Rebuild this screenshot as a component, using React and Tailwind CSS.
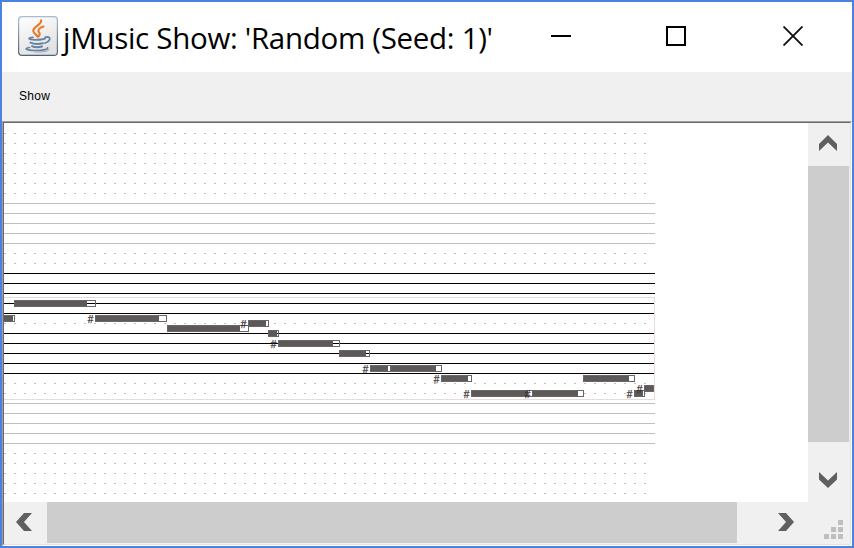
const LEFT = 4;
const TOP = 123;
const STAFF_END = 655;

const dottedRows = [133, 143, 153, 163, 173, 183, 193, 253, 263, 323, 383, 393, 453, 463, 473, 483, 493];
const ledgerRows = [203, 213, 223, 233, 243, 403, 413, 423, 433, 443];
const staffRows = [273, 283, 293, 303, 313, 333, 343, 353, 363, 373];

// x and end bound the outline; fill is where the sounding part stops
const notes = [
  { x: -6, end: 15, fill: 13, y: 315 },
  { x: 14, end: 96, fill: 87, y: 300 },
  { x: 95, end: 167, fill: 159, y: 315, sharp: true },
  { x: 167, end: 249, fill: 240, y: 325 },
  { x: 248, end: 269, fill: 266, y: 320, sharp: true },
  { x: 268, end: 279, fill: 277, y: 330 },
  { x: 278, end: 340, fill: 333, y: 340, sharp: true },
  { x: 339, end: 370, fill: 366, y: 350 },
  { x: 370, end: 391, fill: 388, y: 365, sharp: true },
  { x: 390, end: 442, fill: 436, y: 365 },
  { x: 441, end: 472, fill: 468, y: 375, sharp: true },
  { x: 471, end: 533, fill: 528, y: 390, sharp: true },
  { x: 532, end: 584, fill: 578, y: 390, sharp: true },
  { x: 583, end: 635, fill: 629, y: 375 },
  { x: 634, end: 645, fill: 643, y: 390, sharp: true },
  { x: 644, end: 654, fill: 653, y: 385, sharp: true },
];

// Notes with an empty tail hide the dotted rows beneath, but not the solid ones
const isOnSolidRow = (y) => staffRows.includes(y + 3);

function Score() {
  return (
    <svg width="804" height="379" viewBox={`${LEFT} ${TOP} 804 379`} className="block bg-white" shapeRendering="crispEdges">
      {dottedRows.map((y) => (
        <path key={y} d={`M4 ${y + 0.5}H646`} stroke="#c0c0c0" strokeDasharray="2 8" />
      ))}
      {ledgerRows.map((y) => (
        <path key={y} d={`M4 ${y + 0.5}H${STAFF_END}`} stroke="#c0c0c0" />
      ))}
      {staffRows.map((y) => (
        <path key={y} d={`M4 ${y + 0.5}H${STAFF_END}`} stroke="#000" />
      ))}
      <path d="M4 297.5H654.5V399.5H4" fill="none" stroke="#e6dcdc" />
      {notes.map((n) => (
        <g key={`${n.x}-${n.y}`}>
          {!isOnSolidRow(n.y) && <rect x={n.x} y={n.y} width={n.end - n.x} height="7" fill="#fff" />}
          <rect x={n.x} y={n.y} width={n.fill - n.x} height="7" fill="#5d5959" />
          <rect x={n.x + 0.5} y={n.y + 0.5} width={n.end - n.x - 1} height="6" fill="none" stroke="#6a6666" />
        </g>
      ))}
      {notes
        .filter((n) => n.sharp)
        .map((n) => (
          <text
            key={`${n.x}-${n.y}`}
            x={n.x - 7.2}
            y={n.y + 8}
            fontSize="10"
            fontFamily="'Liberation Sans', sans-serif"
            fill="#363232"
            stroke="#363232"
            strokeWidth="0.25"
          >
            #
          </text>
        ))}
    </svg>
  );
}

function JavaIcon() {
  return (
    <svg width="40" height="40" viewBox="0 0 40 40">
      <defs>
        <linearGradient id="plate" x1="0" y1="0" x2="0.4" y2="1">
          <stop offset="0" stopColor="#fff" />
          <stop offset="0.55" stopColor="#efefef" />
          <stop offset="1" stopColor="#e2e2e2" />
        </linearGradient>
        <linearGradient id="rim" x1="0" y1="0" x2="0" y2="1">
          <stop offset="0" stopColor="#a9bdd0" />
          <stop offset="1" stopColor="#4c6478" />
        </linearGradient>
      </defs>
      <rect x="0.6" y="0.6" width="38.8" height="38.8" rx="3.5" fill="url(#plate)" stroke="url(#rim)" strokeWidth="1.2" />
      <g fill="none" strokeLinecap="round">
        <path d="M23 4.500C24.500 8.500 14.800 10.500 15.300 15C15.600 17.500 18.500 18.500 19.500 20.500" stroke="#e8792b" strokeWidth="2.200" />
        <path d="M25.500 10.500C21 12 19.300 14 21 16.200C22.500 18 21.500 19.500 20.500 20.500" stroke="#e8792b" strokeWidth="2" />
        <path d="M15 21.300C9 22 10 23.600 17 23.800C22 23.800 25 23.400 27 22.600" stroke="#6583a0" strokeWidth="1.700" />
        <path d="M27 21.300C33 19.800 33.500 24.500 27 27" stroke="#6583a0" strokeWidth="1.800" />
        <path d="M12.500 26.600C16 28.200 21 28.100 25 27.200" stroke="#6583a0" strokeWidth="2" />
        <path d="M14 30.200C17 31.700 20.500 31.500 24 30.500" stroke="#6583a0" strokeWidth="2" />
        <path d="M11.500 31.500C5.500 32.500 8 34.300 17 34.500C26 34.600 30.500 33 29.500 31.800" stroke="#6583a0" strokeWidth="1.700" />
        <path d="M17 36C23 36.200 29.500 35.800 31.500 33.600" stroke="#8fa6bb" strokeWidth="0.900" />
      </g>
    </svg>
  );
}

function TitleBar() {
  return (
    <header className="flex h-[70px] items-center bg-white pb-0.5 pl-4">
      <JavaIcon />
      <h1 className="ml-[5px] w-[488px] whitespace-nowrap pt-1 font-['Open_Sans','Noto_Sans',sans-serif] text-[29.5px] leading-[40px] tracking-[-0.3px] text-black">
        jMusic Show: 'Random (Seed: 1)'
      </h1>
      <div className="h-0.5 w-5 bg-black" />
      <div className="ml-[95px] size-5 border-2 border-black" />
      <svg className="ml-[97px]" width="20" height="20" viewBox="0 0 20 20">
        <path d="M0.500 0.500L19.500 19.500M19.500 0.500L0.500 19.500" stroke="#111" strokeWidth="1.900" />
      </svg>
    </header>
  );
}

function Arrow({ points, width, height, className }) {
  return (
    <svg width={width} height={height} className={className}>
      <polygon points={points} fill="#606060" />
    </svg>
  );
}

function VerticalScrollbar() {
  return (
    <div className="flex h-[379px] w-[41px] flex-col items-center bg-[#f0f0f0]">
      <div className="flex h-[43px] w-full flex-col pl-[11px] pt-3">
        <Arrow width="18" height="16" points="9,0 18,9 18,16 9,7.5 0,16 0,9" />
      </div>
      <div className="h-[276px] w-full bg-[#cdcdcd]" />
      <div className="flex h-[60px] w-full flex-col pl-[11px] pt-[30px]">
        <Arrow width="18" height="16" points="0,0 9,8.500 18,0 18,7.500 9,16 0,7.500" />
      </div>
    </div>
  );
}

function HorizontalScrollbar() {
  return (
    <div className="flex h-[41px] w-[804px] bg-[#f0f0f0]">
      <div className="w-[43px] pl-3 pt-[11px]">
        <Arrow width="16" height="18" points="8,0 16,0 8,9 16,18 8,18 0,9" className="block" />
      </div>
      <div className="w-[690px] bg-[#cdcdcd]" />
      <div className="pl-[41px] pt-[11px]">
        <Arrow width="16" height="18" points="0,0 8,0 16,9 8,18 0,18 8,9" className="block" />
      </div>
    </div>
  );
}

function ResizeGrip() {
  return (
    <div className="flex h-[41px] w-[41px] flex-col items-end gap-0.5 bg-[#f0f0f0] pr-1.5 pt-[18px]">
      {[1, 2, 3].map((count) => (
        <div key={count} className="flex gap-0.5">
          {Array.from({ length: count }, (_, i) => (
            <div key={i} className="size-[5px] bg-[#bfbfbf]" />
          ))}
        </div>
      ))}
    </div>
  );
}

export default function App() {
  return (
    <div className="h-[548px] w-[854px] overflow-hidden border-2 border-[#4a82dd] bg-white">
      <TitleBar />
      <nav className="flex h-[49px] items-center bg-[#f0f0f0] pl-[17px]">
        <span className="-mt-0.5 font-['Liberation_Sans',Arial,sans-serif] text-xs tracking-[0.3px] text-black">Show</span>
      </nav>
      <main className="h-[425px] w-[850px] border border-b-white border-l-[#a0a0a0] border-r-white border-t-[#a0a0a0]">
        <div className="h-[423px] w-[848px] border border-b-[#e3e3e3] border-l-[#696969] border-r-[#e3e3e3] border-t-[#696969] bg-[#f0f0f0]">
          <div className="flex">
            <Score />
            <VerticalScrollbar />
          </div>
          <div className="flex">
            <HorizontalScrollbar />
            <ResizeGrip />
          </div>
        </div>
      </main>
    </div>
  );
}
